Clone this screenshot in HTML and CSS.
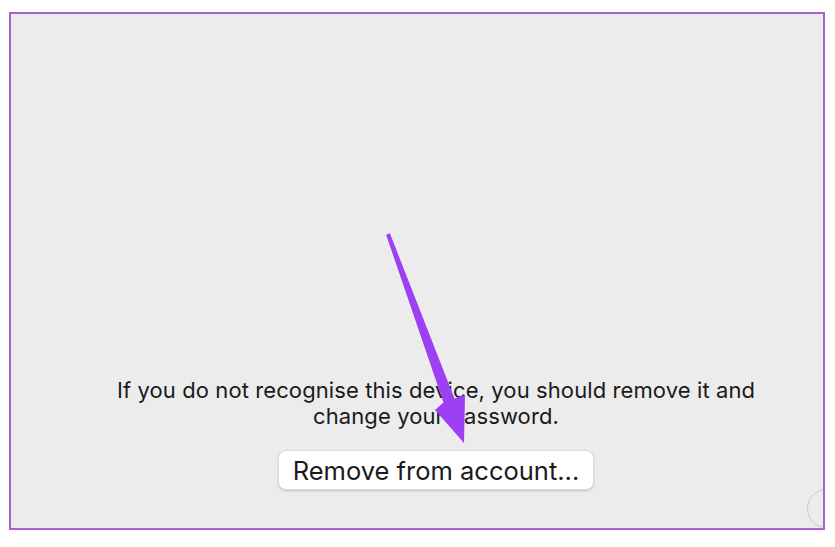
FILE: index.html
```html
<!doctype html>
<html>
    <head>
        <meta charset="UTF-8" />
        <meta name="viewport" content="width=device-width" />
        <title>Device</title>
        <link rel="stylesheet" href="styles.css">
    </head>
    <body>
        <div id="frame">
            <div class="content">
                <p class="notice">
                    If you do not recognise this device, you should remove it and<br />
                    change your password.
                </p>
                <button id="remove">Remove from account...</button>
            </div>
            <span class="corner"></span>
            <svg class="arrow" width="835" height="547" viewBox="0 0 835 547">
                <polygon
                    fill="#9d3ff3"
                    points="389.9,233.3 454.5,398.5 465,395 464,443 435,410 443.5,402.5 386.1,234.7"
                />
            </svg>
        </div>
    </body>
</html>
```

FILE: styles.css
```css
html,
body {
    background-color: #fff;
}
body {
    margin: 0;
    font-family: Inter, "Liberation Sans", sans-serif;
    color: #1a1a1a;
}
#frame {
    position: relative;
    margin: 12px 0 0 9px;
    width: 812px;
    height: 514px;
    border: 2px solid #a862d0;
    background-color: #ececec;
    overflow: hidden;
}
.content {
    height: 100%;
    box-sizing: border-box;
    display: flex;
    flex-direction: column;
    align-items: center;
    justify-content: flex-end;
    padding: 0 0 38px 38px;
}
.notice {
    margin: 0 0 21px;
    font-size: 22px;
    line-height: 26px;
    letter-spacing: 0.1px;
    text-align: center;
}
#remove {
    height: 40px;
    padding: 0 14px;
    font-family: inherit;
    font-size: 25.5px;
    color: #1a1a1a;
    background-color: #fff;
    border: 1px solid #dcdcdc;
    border-radius: 8px;
    box-shadow: 0 1px 2px rgba(0, 0, 0, 0.18);
    cursor: pointer;
}
.corner {
    position: absolute;
    right: -23px;
    bottom: 0;
    width: 37px;
    height: 37px;
    border: 1.5px solid #c9c9c9;
    border-radius: 50%;
}
.arrow {
    position: absolute;
    left: -11px;
    top: -14px;
    pointer-events: none;
}
```
